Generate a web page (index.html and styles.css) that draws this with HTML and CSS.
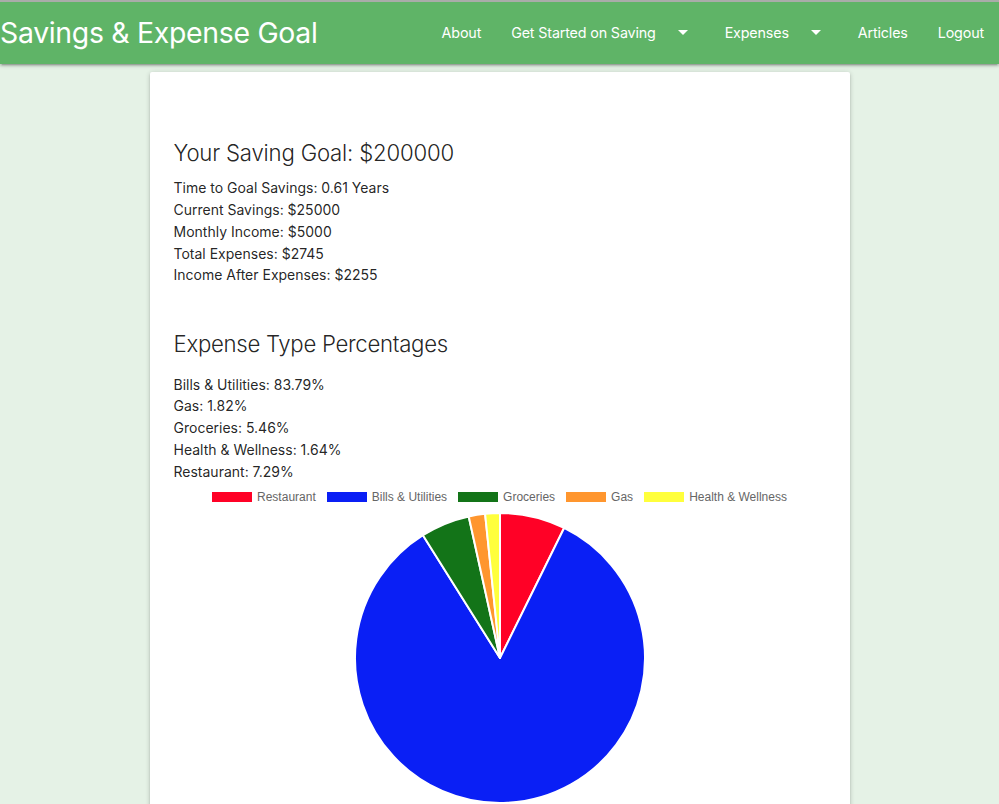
FILE: index.html
```html
<!DOCTYPE html>
<html lang="en">
<head>
<meta charset="utf-8">
<title>Savings &amp; Expense Goal</title>
<link rel="stylesheet" href="styles.css">
</head>
<body>
<nav class="navbar">
  <a class="brand" href="#">Savings &amp; Expense Goal</a>
  <ul class="nav-links">
    <li><a href="#">About</a></li>
    <li><a href="#">Get Started on Saving<svg class="caret" viewBox="0 0 24 24" width="24" height="24"><path d="M7 10l5 5 5-5z" fill="#fff"/></svg></a></li>
    <li><a href="#">Expenses<svg class="caret" viewBox="0 0 24 24" width="24" height="24"><path d="M7 10l5 5 5-5z" fill="#fff"/></svg></a></li>
    <li><a href="#">Articles</a></li>
    <li><a href="#">Logout</a></li>
  </ul>
</nav>

<main class="container">
  <section class="card">
    <h5 class="goal-title">Your Saving Goal: $200000</h5>
    <div class="stats">
      <div>Time to Goal Savings: 0.61 Years</div>
      <div>Current Savings: $25000</div>
      <div>Monthly Income: $5000</div>
      <div>Total Expenses: $2745</div>
      <div>Income After Expenses: $2255</div>
    </div>

    <h5 class="pct-title">Expense Type Percentages</h5>
    <div class="stats pct-list">
      <div>Bills &amp; Utilities: 83.79%</div>
      <div>Gas: 1.82%</div>
      <div>Groceries: 5.46%</div>
      <div>Health &amp; Wellness: 1.64%</div>
      <div>Restaurant: 7.29%</div>
    </div>

    <div class="legend">
      <span class="legend-item"><i class="swatch sw-rest"></i>Restaurant</span>
      <span class="legend-item"><i class="swatch sw-bills"></i>Bills &amp; Utilities</span>
      <span class="legend-item"><i class="swatch sw-groc"></i>Groceries</span>
      <span class="legend-item"><i class="swatch sw-gas"></i>Gas</span>
      <span class="legend-item"><i class="swatch sw-health"></i>Health &amp; Wellness</span>
    </div>

    <div class="chart">
      <svg viewBox="0 0 292 292" width="292" height="292">
        <g stroke="#fff" stroke-width="2" stroke-linejoin="round">
          <path d="M146 146 L146 1 A145 145 0 0 1 210.12 15.95 Z" fill="#ff0126"/>
          <path d="M146 146 L210.12 15.95 A145 145 0 1 1 68.92 23.18 Z" fill="#0a1ff5"/>
          <path d="M146 146 L68.92 23.18 A145 145 0 0 1 114.72 4.41 Z" fill="#137418"/>
          <path d="M146 146 L114.72 4.41 A145 145 0 0 1 131.09 1.77 Z" fill="#ff962e"/>
          <path d="M146 146 L131.09 1.77 A145 145 0 0 1 146 1 Z" fill="#ffff3c"/>
        </g>
      </svg>
    </div>
  </section>
</main>
</body>
</html>
```

FILE: styles.css
```css
* { box-sizing: border-box; }

html, body {
  margin: 0;
  padding: 0;
}

body {
  background: #e5f2e6;
  font-family: Inter, "Noto Sans", sans-serif;
  color: rgba(0, 0, 0, 0.87);
  border-top: 2px solid #a9aca9;
}

.navbar {
  height: 62px;
  background: #5fb467;
  display: flex;
  align-items: center;
  justify-content: space-between;
  box-shadow: 0 2px 2px 0 rgba(0,0,0,0.14), 0 3px 1px -2px rgba(0,0,0,0.12), 0 1px 5px 0 rgba(0,0,0,0.2);
  position: relative;
  z-index: 2;
}

.brand {
  color: #fff;
  text-decoration: none;
  font-size: 28.4px;
  font-weight: 400;
  letter-spacing: -0.3px;
  line-height: 62px;
}

.nav-links {
  list-style: none;
  margin: 0;
  padding: 0;
  display: flex;
  height: 62px;
}

.nav-links a {
  display: flex;
  align-items: center;
  height: 62px;
  padding: 0 15px 2px;
  color: #fff;
  text-decoration: none;
  font-size: 14.3px;
  letter-spacing: -0.15px;
}

.caret {
  margin-left: 15px;
  display: block;
}

.container {
  width: 700px;
  margin: 0 auto;
}

.card {
  background: #fff;
  margin-top: 8px;
  border-radius: 2px;
  padding: 0 24px 24px;
  box-shadow: 0 2px 2px 0 rgba(0,0,0,0.14), 0 3px 1px -2px rgba(0,0,0,0.12), 0 1px 5px 0 rgba(0,0,0,0.2);
}

.goal-title, .pct-title {
  font-size: 22.2px;
  font-weight: 300;
  line-height: 26.4px;
  margin: 0;
  letter-spacing: -0.2px;
}

.goal-title { padding-top: 68px; margin-bottom: 11px; }

.pct-title { margin-top: 45px; margin-bottom: 16px; letter-spacing: -0.3px; }

.stats {
  font-size: 14px;
  line-height: 21.75px;
}

.legend {
  margin-top: 9px;
  display: flex;
  justify-content: center;
  gap: 11px;
  font-family: "Liberation Sans", Arial, sans-serif;
  font-size: 12px;
  color: #666;
  line-height: 12px;
}

.legend-item {
  display: flex;
  align-items: center;
}

.swatch {
  display: inline-block;
  width: 40px;
  height: 10px;
  margin-right: 5px;
}

.sw-rest { background: #ff0126; }
.sw-bills { background: #0a1ff5; }
.sw-groc { background: #137418; }
.sw-gas { background: #ff962e; }
.sw-health { background: #ffff3c; }

.chart {
  margin-top: 9px;
  display: flex;
  justify-content: center;
}

.chart svg { display: block; }
```
